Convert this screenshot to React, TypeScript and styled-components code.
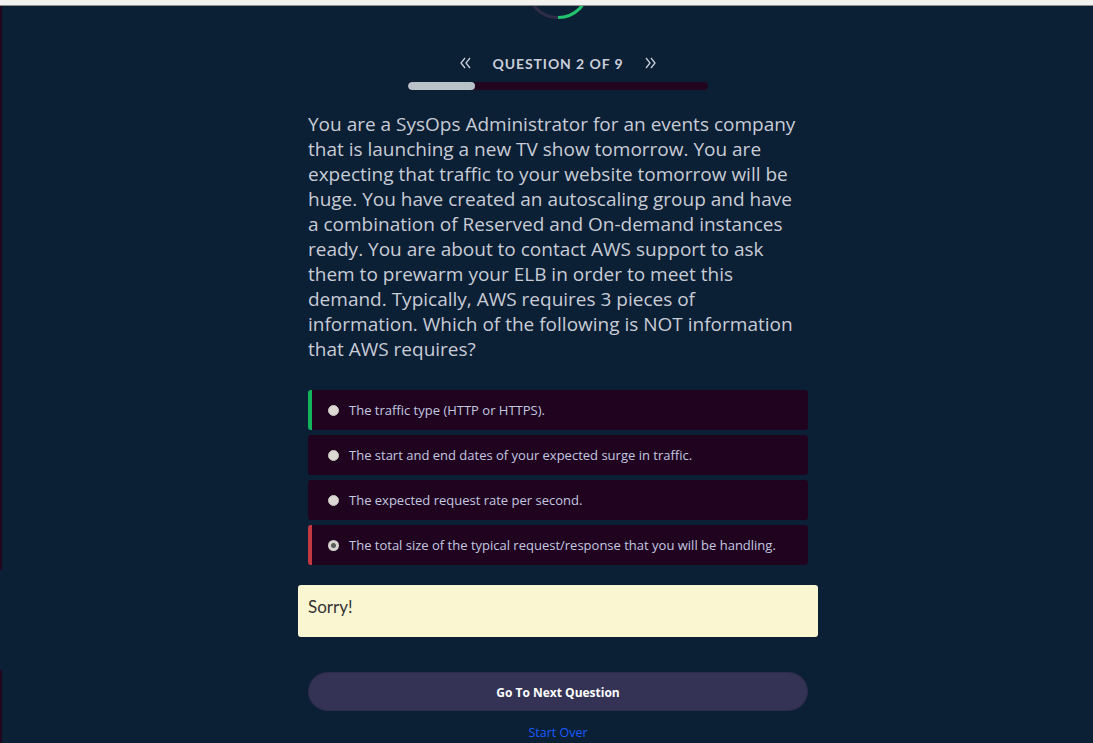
import React, { ReactElement } from "react";
import styled, { createGlobalStyle } from "styled-components";

const GlobalStyle = createGlobalStyle`
  html, body {
    margin: 0;
    padding: 0;
    background: #0b1f35;
  }
  body {
    font-family: "Open Sans", "Liberation Sans", sans-serif;
  }
`;

const TopBar = styled.div`
  position: fixed;
  top: 0;
  left: 0;
  right: 0;
  height: 5px;
  background: #f2f2f0;
  border-bottom: 1px solid #8f8f8f;
  z-index: 5;
`;

const Page = styled.div`
  display: flex;
  min-height: 743px;
  overflow: hidden;
  background: #0b1f35;
`;

const EdgeColumn = styled.div`
  width: 2px;
  display: flex;
  flex-direction: column;
`;

const EdgePiece = styled.div<{ $h: number; $on: boolean }>`
  height: ${(p) => p.$h}px;
  background: ${(p) => (p.$on ? "#22061f" : "transparent")};
`;

const Main = styled.div`
  flex: 1;
  display: flex;
  flex-direction: column;
  align-items: center;
  padding-left: 21px;
`;

const Ring = styled.svg`
  margin-top: -45px;
  display: block;
`;

const Pager = styled.div`
  margin-top: 34px;
  display: flex;
  align-items: center;
  gap: 22px;
  height: 20px;
  color: #c9ced9;
`;

const PagerTitle = styled.span`
  font-family: "Lato", "DejaVu Sans", sans-serif;
  font-weight: 700;
  font-size: 14px;
  letter-spacing: 0.9px;
  padding-top: 1px;
`;

const Chevron = styled.svg`
  display: block;
`;

const Progress = styled.div`
  margin-top: 9px;
  width: 300px;
  height: 8px;
  border-radius: 4px;
  background: #22051f;
  overflow: hidden;
`;

const ProgressFill = styled.div`
  height: 100%;
  background: #b9c1c9;
  border-radius: 4px;
`;

const Column = styled.div`
  width: 500px;
  display: flex;
  flex-direction: column;
`;

const QuestionText = styled.p`
  margin: 22px 0 0;
  padding-right: 10px;
  font-family: "Open Sans", sans-serif;
  font-size: 19px;
  line-height: 25px;
  color: #c8ccd5;
`;

const Options = styled.div`
  margin-top: 28px;
  display: flex;
  flex-direction: column;
  gap: 5px;
`;

const Option = styled.div<{ $mark?: string }>`
  height: 40px;
  display: flex;
  align-items: center;
  gap: 10px;
  padding-left: 16px;
  background: #20041f;
  border-radius: 3px;
  border-left: 4px solid ${(p) => p.$mark || "#20041f"};
  box-sizing: border-box;
  font-family: "Open Sans", sans-serif;
  font-size: 13px;
  color: #c3c8e0;
`;

const Radio = styled.span<{ $checked?: boolean }>`
  width: 11px;
  height: 11px;
  border-radius: 50%;
  background: ${(p) => (p.$checked ? "#5a5a5a" : "#dcd9d4")};
  flex-shrink: 0;
  box-sizing: border-box;
  border: ${(p) => (p.$checked ? "3px solid #d6d3ce" : "1px solid #c9c6c1")};
`;

const Feedback = styled.div`
  margin-top: 20px;
  width: 520px;
  height: 52px;
  box-sizing: border-box;
  padding: 11px 10px;
  background: #fbf6d2;
  border-radius: 3px;
  font-family: "Lato", sans-serif;
  font-size: 17px;
  color: #333;
`;

const NextButton = styled.button`
  margin-top: 35px;
  width: 500px;
  height: 39px;
  padding-top: 2px;
  border-radius: 20px;
  border: 1px solid #2d2c4a;
  background: #343356;
  color: #fff;
  font-family: "Open Sans", sans-serif;
  font-weight: 700;
  font-size: 12px;
  cursor: pointer;
`;

const StartOver = styled.a`
  margin-top: 13px;
  font-family: "Open Sans", sans-serif;
  font-size: 12.5px;
  color: #1a5cff;
  text-decoration: none;
  cursor: pointer;
`;

const options = [
  { text: "The traffic type (HTTP or HTTPS).", mark: "#12b35a" },
  { text: "The start and end dates of your expected surge in traffic." },
  { text: "The expected request rate per second." },
  {
    text: "The total size of the typical request/response that you will be handling.",
    mark: "#c2393f",
    checked: true,
  },
];

function DoubleChevron({ dir }: { dir: "left" | "right" }) {
  const d =
    dir === "left"
      ? "M5 1 L1 6 L5 11 M10 1 L6 6 L10 11"
      : "M1 1 L5 6 L1 11 M6 1 L10 6 L6 11";
  return (
    <Chevron width="11" height="12" viewBox="0 0 11 12">
      <path d={d} fill="none" stroke="#c9ced9" strokeWidth="1.3" />
    </Chevron>
  );
}

export default function App(): ReactElement {
  const current = 2;
  const total = 9;
  return (
    <>
      <GlobalStyle />
      <TopBar />
      <Page>
        <EdgeColumn>
          <EdgePiece $h={570} $on />
          <EdgePiece $h={100} $on={false} />
          <EdgePiece $h={73} $on />
        </EdgeColumn>
        <Main>
          <Ring width="64" height="64" viewBox="0 0 64 64">
            <circle cx="32" cy="32" r="30.5" fill="none" stroke="#2e2c46" strokeWidth="3" />
            <path d="M32 62.5 A30.5 30.5 0 0 0 62.5 32 A30.5 30.5 0 0 0 32 1.5" fill="none" stroke="#1fc46c" strokeWidth="3" />
          </Ring>
          <Pager>
            <DoubleChevron dir="left" />
            <PagerTitle>QUESTION {current} OF {total}</PagerTitle>
            <DoubleChevron dir="right" />
          </Pager>
          <Progress>
            <ProgressFill style={{ width: `${(current / total) * 100}%` }} />
          </Progress>
          <Column>
            <QuestionText>
              You are a SysOps Administrator for an events company that is launching a new TV show
              tomorrow. You are expecting that traffic to your website tomorrow will be huge. You have
              created an autoscaling group and have a combination of Reserved and On-demand instances
              ready. You are about to contact AWS support to ask them to prewarm your ELB in order to
              meet this demand. Typically, AWS requires 3 pieces of information. Which of the following
              is NOT information that AWS requires?
            </QuestionText>
            <Options>
              {options.map((o) => (
                <Option key={o.text} $mark={o.mark}>
                  <Radio $checked={o.checked} />
                  {o.text}
                </Option>
              ))}
            </Options>
          </Column>
          <Feedback>Sorry!</Feedback>
          <NextButton>Go To Next Question</NextButton>
          <StartOver>Start Over</StartOver>
        </Main>
      </Page>
    </>
  );
}
